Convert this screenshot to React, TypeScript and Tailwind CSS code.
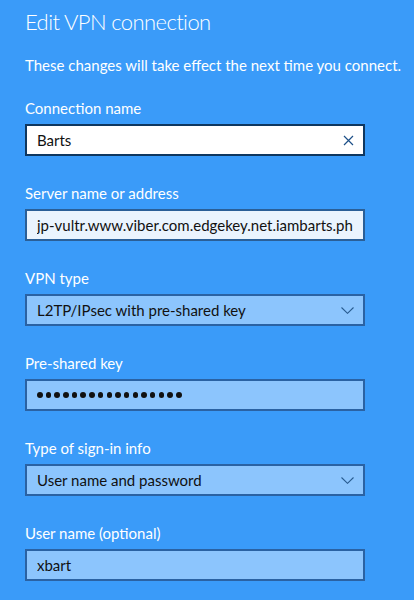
import React from "react";

type FieldProps = {
  label: string;
  variant: "focus" | "light" | "filled";
  children: React.ReactNode;
  icon?: "clear" | "chevron";
};

const boxStyles = {
  focus: "bg-white border-[#0f375f]",
  light: "bg-[#eaf4fe] border-[#2a5f97]",
  filled: "bg-[#8cc5fd] border-[#2a62a3]",
};

function ClearIcon() {
  return (
    <svg width="11" height="11" viewBox="0 0 11 11" className="shrink-0">
      <path d="M1 1 L10 10 M10 1 L1 10" stroke="#1d5088" strokeWidth="1.2" fill="none" />
    </svg>
  );
}

function Chevron() {
  return (
    <svg width="13" height="7" viewBox="0 0 13 7" className="shrink-0">
      <path d="M0.5 0.5 L6.5 6.3 L12.5 0.5" stroke="#285b8f" strokeWidth="1.1" fill="none" />
    </svg>
  );
}

function Field({ label, variant, children, icon }: FieldProps) {
  return (
    <div className="flex flex-col">
      <div className="text-[15px] leading-[20px] text-white">{label}</div>
      <div
        className={`mt-[6px] flex h-[32px] w-[340px] items-center border-2 pl-[10px] pr-[9px] text-[15px] text-[#111] ${boxStyles[variant]}`}
      >
        <div className="flex-1 overflow-hidden whitespace-nowrap">{children}</div>
        {icon === "clear" && <ClearIcon />}
        {icon === "chevron" && <Chevron />}
      </div>
    </div>
  );
}

export default function App() {
  return (
    <div
      className="min-h-[600px] w-[414px] bg-[#3a9bf9] pl-[25px] pt-[6px]"
      style={{ fontFamily: '"Segoe UI", Lato, sans-serif' }}
    >
      <h1 className="text-[22px] font-light leading-[32px] tracking-[-0.6px] text-white">
        Edit VPN connection
      </h1>
      <p className="mt-[17px] whitespace-nowrap text-[15px] leading-[20px] text-white">
        These changes will take effect the next time you connect.
      </p>
      <div className="mt-[23px] flex flex-col gap-[27px]">
        <Field label="Connection name" variant="focus" icon="clear">
          Barts
        </Field>
        <Field label="Server name or address" variant="light">
          jp-vultr.www.viber.com.edgekey.net.iambarts.ph
        </Field>
        <Field label="VPN type" variant="filled" icon="chevron">
          L2TP/IPsec with pre-shared key
        </Field>
        <Field label="Pre-shared key" variant="filled">
          <div className="flex gap-[3.2px]">
            {Array.from({ length: 17 }).map((_, i) => (
              <span key={i} className="h-[5.5px] w-[5.5px] rounded-full bg-[#111]" />
            ))}
          </div>
        </Field>
        <Field label="Type of sign-in info" variant="filled" icon="chevron">
          User name and password
        </Field>
        <Field label="User name (optional)" variant="filled">
          xbart
        </Field>
      </div>
    </div>
  );
}
